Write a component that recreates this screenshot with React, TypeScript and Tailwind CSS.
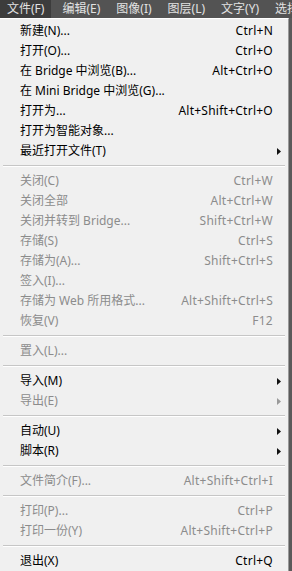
import React from 'react';

type Item = { label: string; key?: string; off?: boolean; sub?: boolean } | 'sep';

const items: Item[] = [
    { label: '新建(N)...', key: 'Ctrl+N' },
    { label: '打开(O)...', key: 'Ctrl+O' },
    { label: '在 Bridge 中浏览(B)...', key: 'Alt+Ctrl+O' },
    { label: '在 Mini Bridge 中浏览(G)...' },
    { label: '打开为...', key: 'Alt+Shift+Ctrl+O' },
    { label: '打开为智能对象...' },
    { label: '最近打开文件(T)', sub: true },
    'sep',
    { label: '关闭(C)', key: 'Ctrl+W', off: true },
    { label: '关闭全部', key: 'Alt+Ctrl+W', off: true },
    { label: '关闭并转到 Bridge...', key: 'Shift+Ctrl+W', off: true },
    { label: '存储(S)', key: 'Ctrl+S', off: true },
    { label: '存储为(A)...', key: 'Shift+Ctrl+S', off: true },
    { label: '签入(I)...', off: true },
    { label: '存储为 Web 所用格式...', key: 'Alt+Shift+Ctrl+S', off: true },
    { label: '恢复(V)', key: 'F12', off: true },
    'sep',
    { label: '置入(L)...', off: true },
    'sep',
    { label: '导入(M)', sub: true },
    { label: '导出(E)', sub: true, off: true },
    'sep',
    { label: '自动(U)', sub: true },
    { label: '脚本(R)', sub: true },
    'sep',
    { label: '文件简介(F)...', key: 'Alt+Shift+Ctrl+I', off: true },
    'sep',
    { label: '打印(P)...', key: 'Ctrl+P', off: true },
    { label: '打印一份(Y)', key: 'Alt+Shift+Ctrl+P', off: true },
    'sep',
    { label: '退出(X)', key: 'Ctrl+Q' },
];

const bar = ['文件(F)', '编辑(E)', '图像(I)', '图层(L)', '文字(Y)', '选择'];

const Arrow = ({ off }: { off?: boolean }) => (
    <svg width="4" height="7" viewBox="0 0 4 7" className={off ? 'fill-[#9a9a9a]' : 'fill-[#111]'}>
        <path d="M0 0 L4 3.5 L0 7 Z" />
    </svg>
);

export default function App() {
    return (
        <div
            className="w-[292px] h-[571px] overflow-hidden bg-[#5a5a5a] text-[12px]"
            style={{ fontFamily: '"Noto Sans", "Noto Sans CJK SC", sans-serif' }}
        >
            {/* top menu bar */}
            <div className="h-[18px] bg-[#535353] flex items-center text-[#e2e2e2] whitespace-nowrap">
                {bar.map((b, i) => (
                    <div
                        key={b}
                        className={`h-full flex items-center ${i === 0 ? 'bg-[#3c3c3c] px-[7px] mr-[4px]' : 'px-[7px] mr-[2px]'}`}
                    >
                        {b}
                    </div>
                ))}
            </div>

            {/* dropdown */}
            <div className="w-[289px] bg-[#f0f0f0] border-t border-t-white border-r border-r-[#9a9a9a] pt-[2px]">
                {items.map((it, i) =>
                    it === 'sep' ? (
                        <div key={i} className="h-[10px] flex items-center px-[3px]">
                            <div className="w-full h-[2px] border-t border-t-[#c6c6c6] border-b border-b-white" />
                        </div>
                    ) : (
                        <div
                            key={i}
                            className={`h-[20px] flex items-center pl-[20px] pr-[15px] whitespace-nowrap ${it.off ? 'text-[#8c8c8c]' : 'text-black'}`}
                        >
                            <span className="flex-1">{it.label}</span>
                            {it.key && <span className="tracking-[0.25px]">{it.key}</span>}
                            {it.sub && (
                                <span className="mr-[-8px]">
                                    <Arrow off={it.off} />
                                </span>
                            )}
                        </div>
                    )
                )}
            </div>
        </div>
    );
}
